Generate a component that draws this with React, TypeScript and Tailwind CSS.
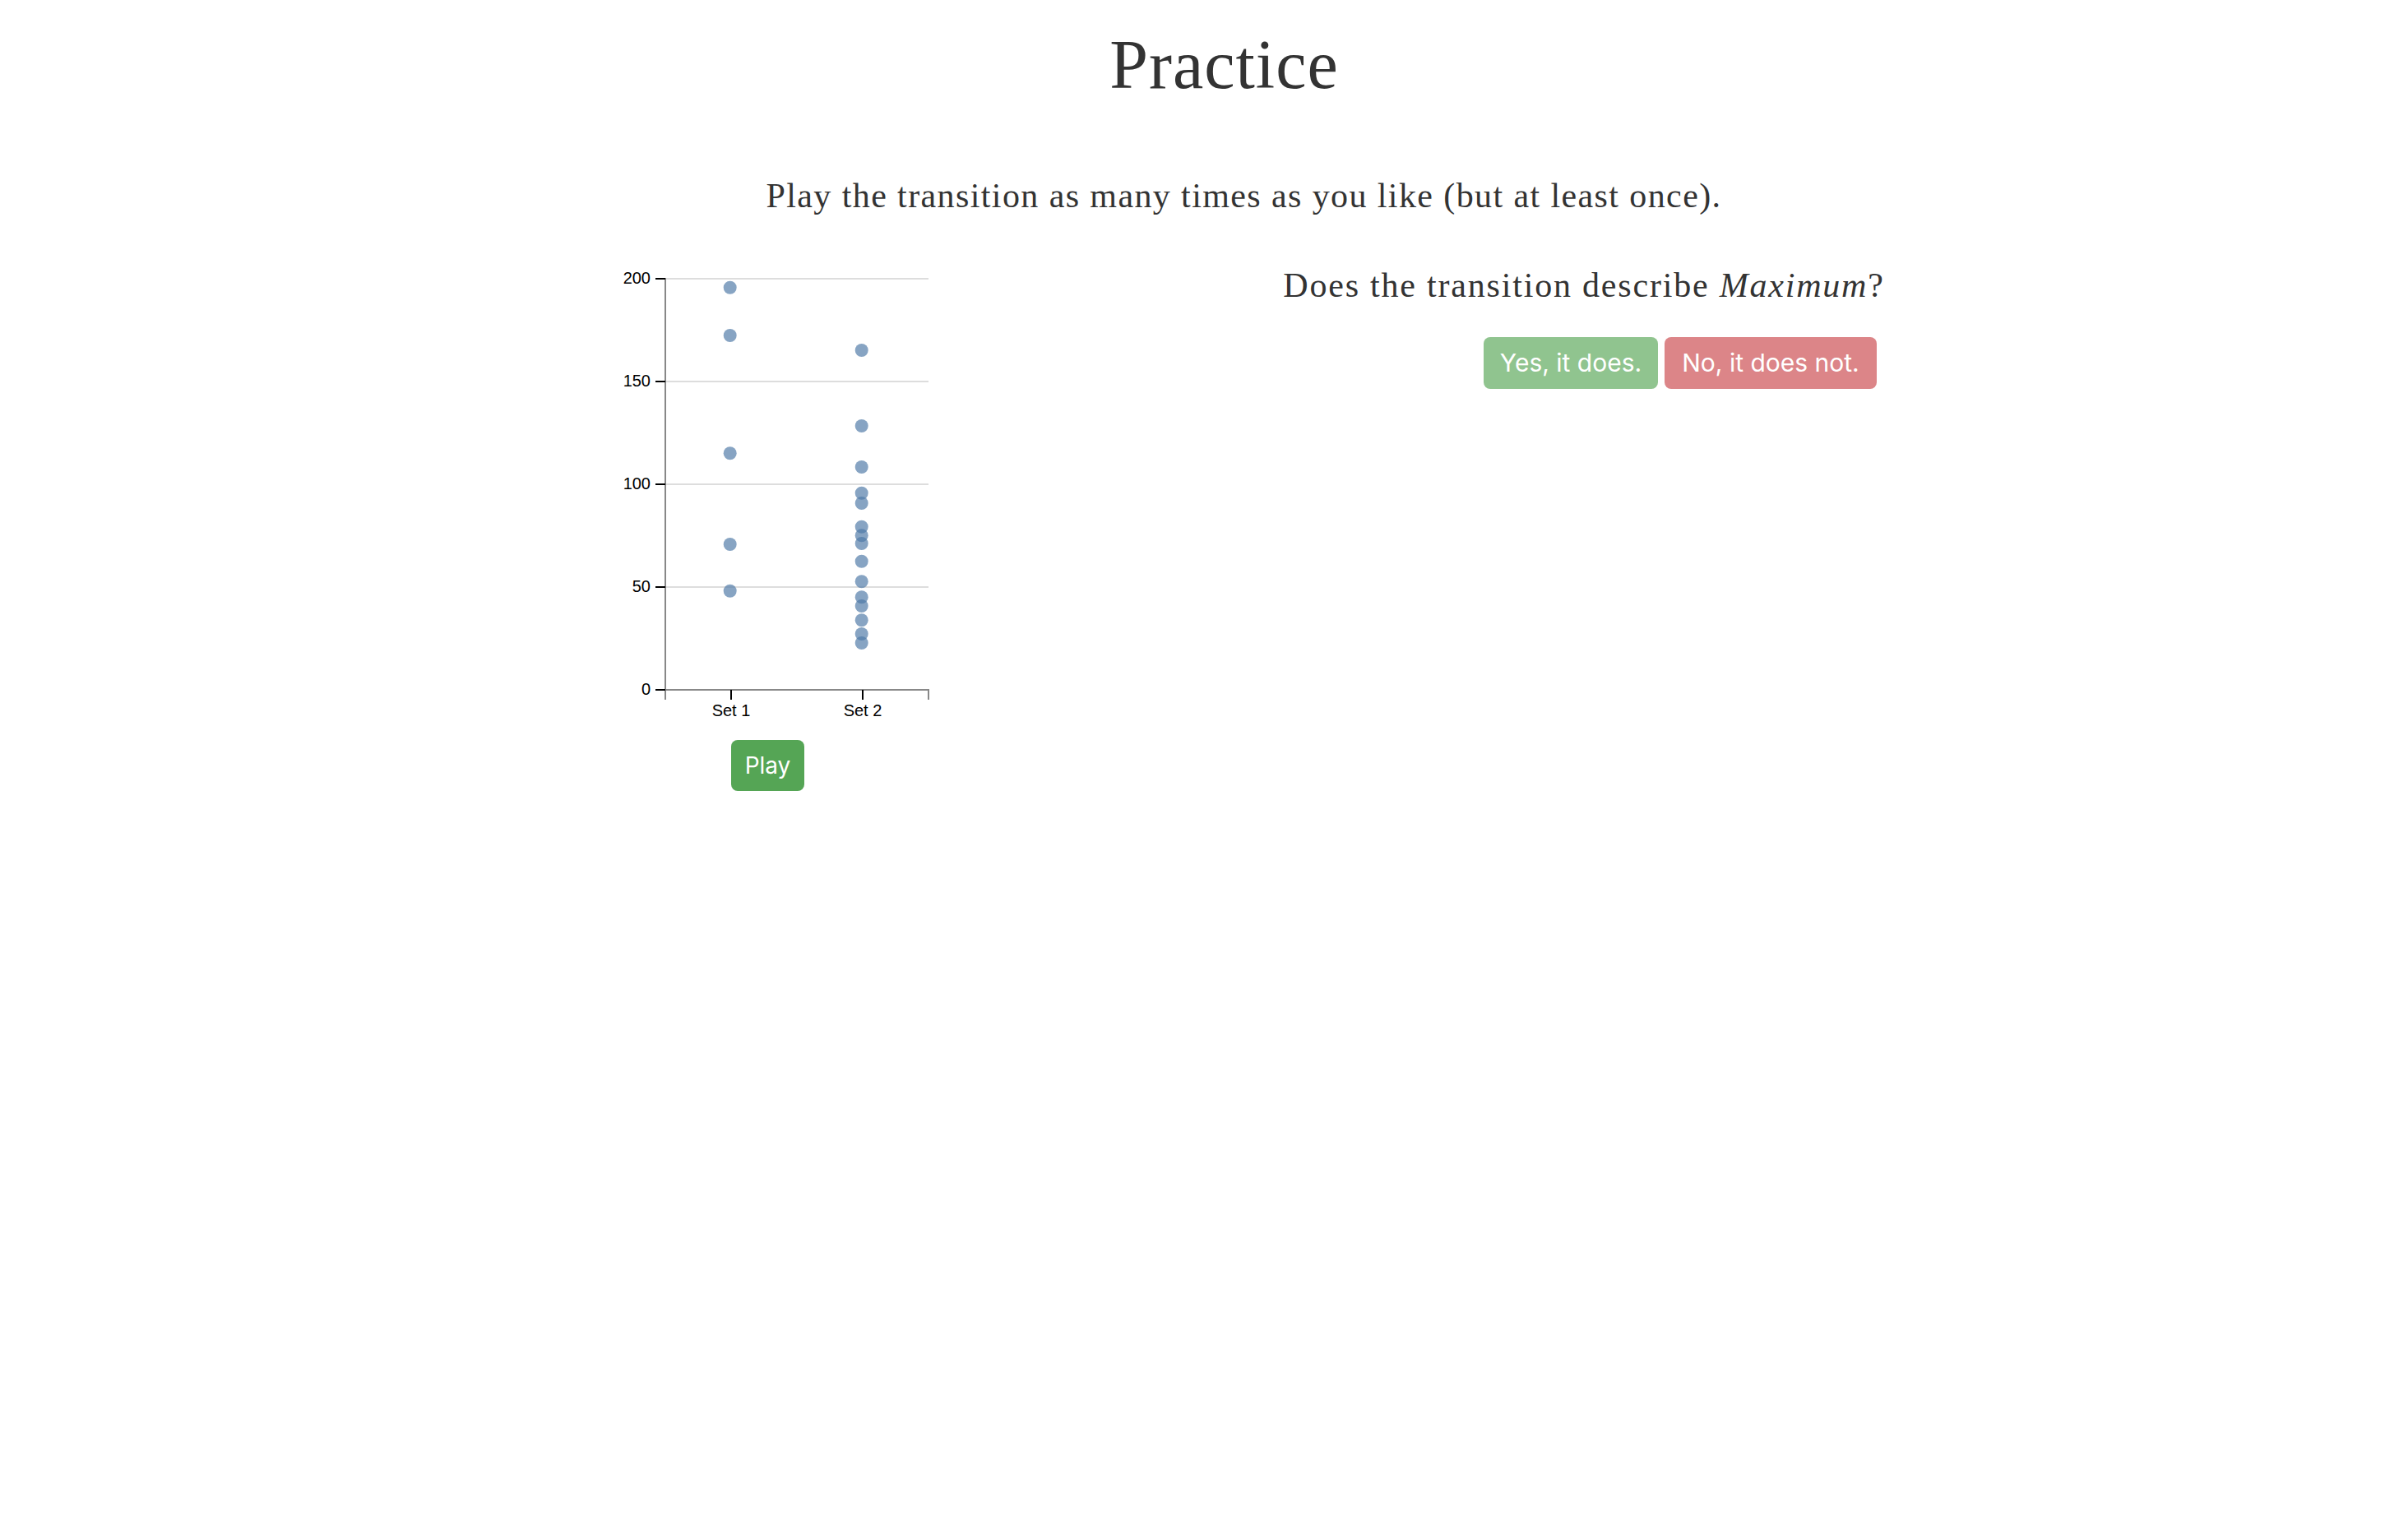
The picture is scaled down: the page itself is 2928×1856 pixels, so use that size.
import React from "react";

const set1 = [195.7, 172.4, 115.1, 70.8, 48.1];
const set2 = [165.2, 128.4, 108.4, 95.7, 90.8, 79.3, 75.1, 71.2, 62.5, 52.7, 45.1, 40.8, 33.9, 27.2, 22.8];

// svg local coords: svg placed at page x=740, y=320
const X0 = 69; // y axis x
const X1 = 389; // right end
const Y0 = 519; // value 0
const PX = 2.5; // px per unit
const yOf = (v: number) => Y0 - v * PX;

function Chart() {
  const ticks = [0, 50, 100, 150, 200];
  return (
    <svg width={400} height={560} className="block">
      {ticks
        .filter((t) => t > 0)
        .map((t) => (
          <line key={"g" + t} x1={X0} x2={X1} y1={yOf(t)} y2={yOf(t)} stroke="#dddddd" strokeWidth={2} />
        ))}
      <path d={`M${X0 - 12},${yOf(200)}H${X0}V${Y0}H${X0 - 12}`} fill="none" stroke="#888888" strokeWidth={2} />
      <path d={`M${X0},${Y0 + 12}V${Y0}H${X1}V${Y0 + 12}`} fill="none" stroke="#888888" strokeWidth={2} />
      {ticks.map((t) => (
        <g key={"t" + t}>
          <line x1={X0 - 12} x2={X0} y1={yOf(t)} y2={yOf(t)} stroke="#000" strokeWidth={2} />
          <text
            x={X0 - 18}
            y={yOf(t)}
            dy="0.32em"
            textAnchor="end"
            fontSize={20}
            fontFamily="'Liberation Sans', Arial, sans-serif"
            fill="#000"
          >
            {t}
          </text>
        </g>
      ))}
      {[
        { x: 149, label: "Set 1" },
        { x: 309, label: "Set 2" },
      ].map((c) => (
        <g key={c.label}>
          <line x1={c.x} x2={c.x} y1={Y0} y2={Y0 + 12} stroke="#000" strokeWidth={2} />
          <text
            x={c.x}
            y={Y0 + 18}
            dy="0.71em"
            textAnchor="middle"
            fontSize={20}
            fontFamily="'Liberation Sans', Arial, sans-serif"
            fill="#000"
          >
            {c.label}
          </text>
        </g>
      ))}
      {set1.map((v, i) => (
        <circle key={"a" + i} cx={147.7} cy={yOf(v)} r={8} fill="#4e79a7" fillOpacity={0.68} />
      ))}
      {set2.map((v, i) => (
        <circle key={"b" + i} cx={307.7} cy={yOf(v)} r={8} fill="#4e79a7" fillOpacity={0.68} />
      ))}
    </svg>
  );
}

export default function App() {
  return (
    <div className="w-[2928px] h-[1856px] bg-white text-[#333333] overflow-hidden">
      <h1
        className="pt-[29px] pl-[49px] text-center text-[84px] leading-[100px] tracking-[1px] font-normal"
        style={{ fontFamily: "'Liberation Serif', Georgia, serif" }}
      >
        Practice
      </h1>
      <p
        className="mt-[84px] pl-[97px] text-center text-[42px] leading-[50px] tracking-[1.4px]"
        style={{ fontFamily: "'Liberation Serif', Georgia, serif" }}
      >
        Play the transition as many times as you like (but at least once).
      </p>
      <div className="mt-[57px] flex pl-[740px]">
        <div className="flex flex-col items-start w-[400px]">
          <Chart />
          <button
            className="mt-[20px] ml-[149px] w-[89px] h-[62px] rounded-[8px] bg-[#55a555] text-white text-[28px] flex items-center justify-center"
            style={{ fontFamily: "Inter, 'Liberation Sans', sans-serif" }}
          >
            Play
          </button>
        </div>
        <div className="flex flex-col w-[1572px]">
          <p
            className="pt-[2px] text-center text-[42px] leading-[50px] tracking-[1.8px]"
            style={{ fontFamily: "'Liberation Serif', Georgia, serif" }}
          >
            Does the transition describe <i>Maximum</i>?
          </p>
          <div
            className="mt-[38px] flex justify-end gap-[8px] pr-[430px]"
            style={{ fontFamily: "Inter, 'Liberation Sans', sans-serif" }}
          >
            <button className="w-[212px] h-[63px] rounded-[8px] bg-[#90c48f] text-white text-[30px] flex items-center justify-center">
              Yes, it does.
            </button>
            <button className="w-[258px] h-[63px] rounded-[8px] bg-[#dc8588] text-white text-[30px] flex items-center justify-center">
              No, it does not.
            </button>
          </div>
        </div>
      </div>
    </div>
  );
}
